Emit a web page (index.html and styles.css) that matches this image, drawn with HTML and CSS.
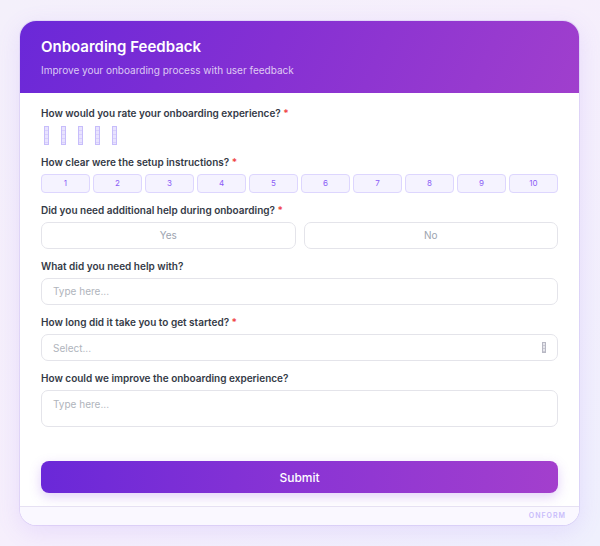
FILE: index.html
```html
<!DOCTYPE html>
<html>
<head>
<meta charset="utf-8">
<link rel="stylesheet" href="styles.css">
</head>
<body>
<div class="page">
  <div class="card">
    <div class="header">
      <h1 class="title">Onboarding Feedback</h1>
      <p class="subtitle">Improve your onboarding process with user feedback</p>
    </div>
    <div class="body">
      <div class="group">
        <div class="label">How would you rate your onboarding experience? <span class="req">*</span></div>
        <div class="stars">
          <span class="tofu"></span><span class="tofu"></span><span class="tofu"></span><span class="tofu"></span><span class="tofu"></span>
        </div>
      </div>
      <div class="group">
        <div class="label">How clear were the setup instructions? <span class="req">*</span></div>
        <div class="scale">
          <div class="num">1</div><div class="num">2</div><div class="num">3</div><div class="num">4</div><div class="num">5</div>
          <div class="num">6</div><div class="num">7</div><div class="num">8</div><div class="num">9</div><div class="num">10</div>
        </div>
      </div>
      <div class="group">
        <div class="label">Did you need additional help during onboarding? <span class="req">*</span></div>
        <div class="choices">
          <div class="choice">Yes</div>
          <div class="choice">No</div>
        </div>
      </div>
      <div class="group">
        <div class="label">What did you need help with?</div>
        <div class="input">Type here...</div>
      </div>
      <div class="group">
        <div class="label">How long did it take you to get started? <span class="req">*</span></div>
        <div class="input select"><span>Select...</span><span class="tofu small"></span></div>
      </div>
      <div class="group">
        <div class="label">How could we improve the onboarding experience?</div>
        <div class="input textarea">Type here...</div>
      </div>
      <button class="submit">Submit</button>
    </div>
    <div class="footer">ONFORM</div>
  </div>
</div>
</body>
</html>
```

FILE: styles.css
```css
* { box-sizing: border-box; }
html, body { margin: 0; padding: 0; }
body {
  width: 600px;
  height: 546px;
  font-family: Inter, "Noto Sans", sans-serif;
  background: linear-gradient(135deg, #f4f0fb 0%, #f6effc 50%, #eff0fd 100%);
  overflow: hidden;
}
.page {
  padding: 21px 21px 0 20px;
}
.card {
  width: 559px;
  background: #fff;
  border-radius: 16px;
  overflow: hidden;
  box-shadow: 0 6px 24px rgba(139, 92, 246, 0.14), 0 0 0 1px rgba(200, 185, 240, 0.35);
}
.header {
  height: 72px;
  padding: 16px 21px 0 21px;
  background: linear-gradient(115deg, #6a28d8 0%, #8530d3 45%, #a03fcd 100%);
  color: #fff;
}
.title {
  margin: 0;
  font-size: 15px;
  font-weight: 600;
  line-height: 20px;
  letter-spacing: 0;
}
.subtitle {
  margin: 6px 0 0 0;
  font-size: 10px;
  line-height: 14px;
  color: rgba(255, 255, 255, 0.75);
}
.body {
  padding: 13px 21px 13px 21px;
}
.group {
  margin-bottom: 10px;
}
.label {
  font-size: 10px;
  font-weight: 600;
  line-height: 14px;
  color: #343a46;
  margin-bottom: 5px;
}
.req { color: #ef4444; }
.stars {
  display: flex;
  gap: 12px;
  height: 20px;
  padding-left: 3px;
  align-items: center;
}
.tofu {
  display: inline-block;
  width: 5px;
  height: 19px;
  border: 1px solid #c7bdfb;
  background: repeating-linear-gradient(180deg, #e8e3fe 0 3px, #d9d0fc 3px 4px);
}
.tofu.small {
  width: 4px;
  height: 11px;
  border-color: #b8b8c4;
  background: repeating-linear-gradient(180deg, #e6e6ec 0 2px, #c9c9d2 2px 3px);
}
.scale {
  display: grid;
  grid-template-columns: repeat(10, 1fr);
  gap: 3px;
}
.num {
  height: 19px;
  border: 1px solid #ddd6fe;
  background: #f5f3ff;
  border-radius: 4px;
  font-size: 8px;
  line-height: 17px;
  text-align: center;
  color: #8b5cf6;
}
.choices {
  display: grid;
  grid-template-columns: 1fr 1fr;
  gap: 8px;
}
.choice {
  height: 27px;
  border: 1.5px solid #e4e4ea;
  border-radius: 7px;
  font-size: 10px;
  line-height: 24px;
  text-align: center;
  color: #9ca3af;
}
.input {
  height: 27px;
  border: 1.5px solid #e4e4ea;
  border-radius: 7px;
  font-size: 10px;
  line-height: 24px;
  padding: 0 11px;
  color: #b0b4bc;
}
.select {
  display: flex;
  justify-content: space-between;
  align-items: center;
}
.textarea {
  height: 37px;
  line-height: 26px;
}
.submit {
  display: block;
  width: 100%;
  height: 32px;
  margin-top: 34px;
  border: none;
  border-radius: 8px;
  background: linear-gradient(90deg, #6a28d8 0%, #8a34d4 50%, #a33fcd 100%);
  color: #fff;
  font-family: Inter, "Noto Sans", sans-serif;
  font-size: 12px;
  font-weight: 500;
  box-shadow: 0 4px 12px rgba(139, 70, 230, 0.25);
}
.footer {
  height: 19px;
  border-top: 1px solid #e6e1f3;
  background: #faf8ff;
  font-size: 7px;
  font-weight: 600;
  letter-spacing: 1px;
  color: #c9bdfb;
  text-align: right;
  line-height: 18px;
  padding-right: 13px;
}
```
